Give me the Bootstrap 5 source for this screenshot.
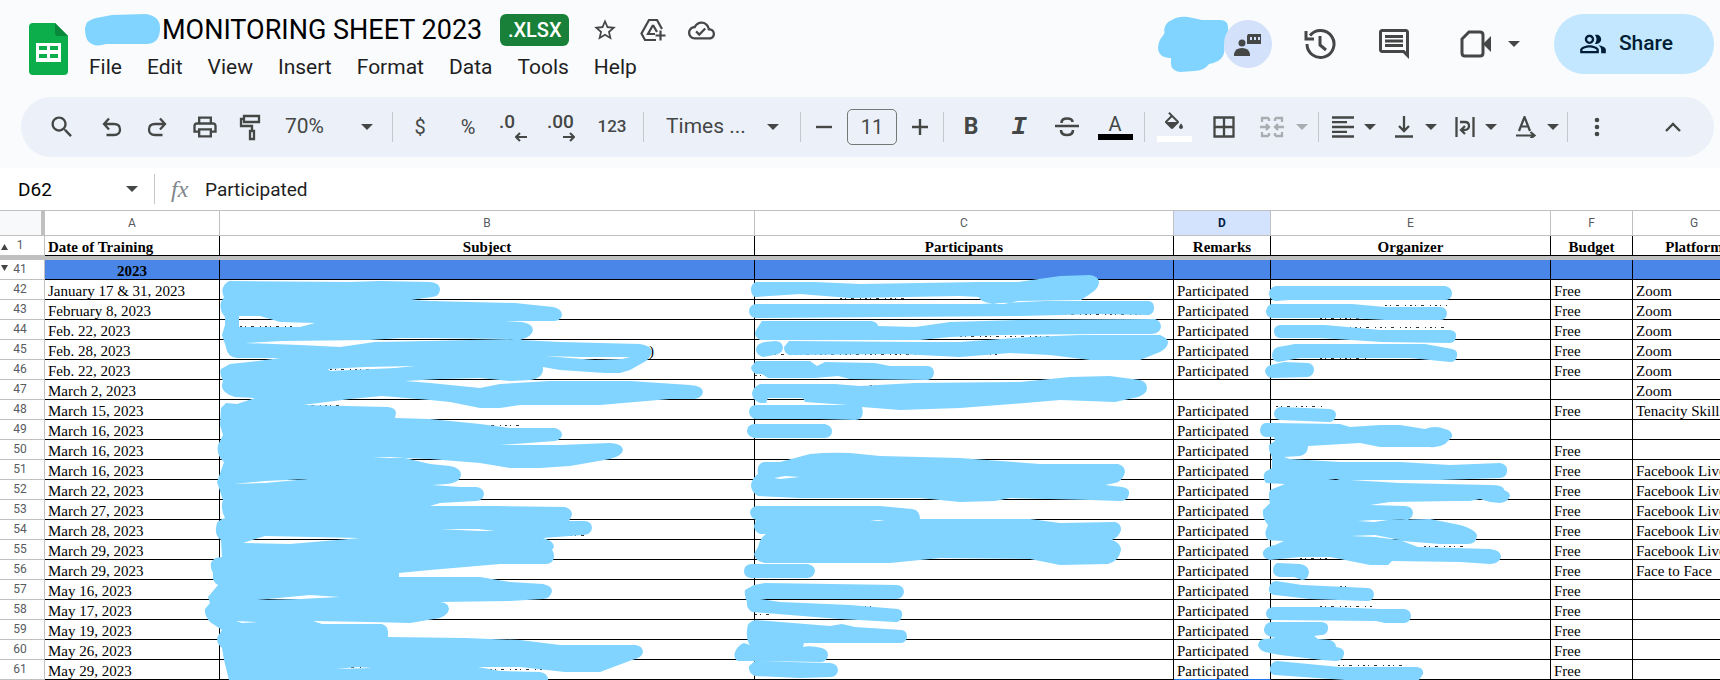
<!DOCTYPE html>
<html lang="en">
<head>
<meta charset="utf-8">
<meta name="viewport" content="width=device-width, initial-scale=1">
<title>Monitoring Sheet 2023</title>
<link href="https://cdn.jsdelivr.net/npm/bootstrap@5.3.0/dist/css/bootstrap.min.css" rel="stylesheet">
<style>
  :root { --ink: #444746; --cover: #80d4ff; --rule: #c0c0c0; }
  body { font-family: Roboto, "Liberation Sans", sans-serif; background: #fff; color: #1f1f1f; overflow: hidden; }
  svg { display: block; flex: none; }
  button, select, input { font-family: inherit; color: inherit; }
  button { background: none; border: 0; padding: 0; }
  .app-top { background: #f9fbfd; padding-bottom: 11px; }
  .app-head { height: 97px; padding: 14px 6px 0 29px; }
  .doc-name { font-size: 27px; font-weight: 400; line-height: 32px; color: #000; margin: 0 0 0 2px; }
  .name-cover { width: 76px; }
  .file-kind { background: #188038; color: #fff; font-size: 20px; font-weight: 500; line-height: 32px; width: 69px; border-radius: 6px; text-align: center; margin-left: 18px; }
  .title-tools { color: var(--ink); gap: 22px; margin-left: 23px; }
  .menu-row { gap: 25px; margin-top: 5px; padding-left: 5px; }
  .menu-row a { font-size: 21px; line-height: 32px; color: #1f1f1f; text-decoration: none; }
  .head-tools { color: var(--ink); height: 60px; }
  .presence { background: #d3e1fb; width: 48px; height: 48px; border-radius: 50%; margin-left: -5px; }
  .share-btn { background: #c2e7ff; color: #001d35; width: 160px; height: 60px; border-radius: 30px; font-size: 21px; font-weight: 500; margin-left: 34px; padding-right: 16px; }
  .tool-strip { background: #ecf1f9; color: var(--ink); height: 60px; border-radius: 30px; margin: 0 6px 0 21px; padding: 0 17px 0 12px; }
  .tool-strip > * { flex: none; }
  .tool-strip button { height: 44px; display: flex; align-items: center; justify-content: center; }
  .t42 { width: 42px; } .t46 { width: 46px; } .t48 { width: 48px; } .t54 { width: 54px; } .t58 { width: 58px; }
  .t-menu { width: 61px; gap: 10px; }
  .t-merge { width: 73px; gap: 12px; color: #a9acb0; }
  .bar { width: 1px; height: 30px; background: #c4c7cc; }
  .pick { appearance: none; border: 0; background: url("data:image/svg+xml,%3Csvg xmlns='http://www.w3.org/2000/svg' width='12' height='6'%3E%3Cpath fill='%23444746' d='M0 0h12L6 6z'/%3E%3C/svg%3E") no-repeat right 19px center; height: 44px; font-size: 21px; }
  .pick-zoom { width: 121px; padding: 0 0 0 14px; }
  .pick-font { width: 156px; padding: 0 0 0 22px; background-position: right 21px center; }
  .size-box { width: 50px; height: 36px; border: 1px solid #747775; border-radius: 5px; background: none; text-align: center; font-size: 20px; padding: 0; }
  .sym { font-size: 20px; line-height: 24px; }
  .sym-bold { font-size: 23px; font-weight: 700; }
  .sym-italic { font: italic 700 26px "Liberation Mono", monospace; }
  .digits { font-size: 17px; font-weight: 500; }
  .decimals { font-size: 19px; font-weight: 500; line-height: 20px; }
  .swatch { width: 35px; height: 6px; }
  .formula-row { height: 42px; }
  .formula-row input { border: 0; background: none; font-size: 19px; padding: 0; height: 30px; }
  .name-box { width: 108px; color: #000; margin-left: 18px; }
  .fx { font: italic 24px "Liberation Serif", serif; color: #80868b; width: 34px; }
  .grid-area { border-top: 1px solid var(--rule); overflow: hidden; }
  .sheet { table-layout: fixed; width: 1756px; border-collapse: separate; border-spacing: 0; font: 15px/17px "Liberation Serif", "Times New Roman", serif; color: #000; }
  .sheet td, .sheet .titles th { height: 20px; padding: 2px 0 0 3px; border-right: 1px solid #000; border-bottom: 1px solid #000; white-space: nowrap; overflow: hidden; vertical-align: bottom; line-height: 16px; padding-top: 3px; }
  .sheet .titles th.text-center, .sheet .year td { padding-left: 0; }
  .sheet .letters th { height: 25px; padding: 0; font: 400 12px/24px Roboto, sans-serif; color: #575b5f; text-align: center; border-right: 1px solid var(--rule); border-bottom: 1px solid var(--rule); }
  .sheet .letters .corner { background: #f8f9fa; border-right: 4px solid var(--rule); }
  .sheet .letters .picked { background: #d3e3fd; color: #041e49; font-weight: 700; }
  .sheet th.rh, .sheet .titles th.rh { position: relative; padding: 0 4px 0 0; height: 20px; font: 400 12px/19px Roboto, sans-serif; color: #575b5f; text-align: center; border-right: 1px solid var(--rule); border-bottom: 1px solid var(--rule); }
  .sheet .rh svg { position: absolute; left: 1px; top: 8px; }
  .sheet .year .rh svg { top: 5px; }
  .sheet .frozen td { height: 4px; padding: 0; border: 0; background: var(--rule); line-height: 0; }
  .sheet .year td { background: #4a86e8; font-weight: 700; text-align: center; }
  .sheet td.above-picked { border-bottom-color: #1a73e8; }
  .covers { position: absolute; left: 0; top: 0; pointer-events: none; }
</style>
</head>
<body>
<div class="app-top">
  <header class="app-head d-flex justify-content-between">
    <div class="d-flex">
      <svg width="39" height="53" viewBox="0 0 39 53" class="mt-2"><path fill="#0cae4b" d="M4 1h22l13 13v35q0 4-4 4H4q-4 0-4-4V5q0-4 4-4z"/><path fill="#07883a" d="M26 1l13 13H29q-3 0-3-3z"/><path fill="#fff" fill-rule="evenodd" d="M7 21h25v19H7zm3 3v4h8v-4zm11 0v4h8v-4zM10 32v4h8v-4zm11 0v4h8v-4z"/></svg>
      <div class="ms-3">
        <div class="d-flex align-items-center">
          <svg class="name-cover" width="76" height="32" viewBox="0 0 76 32"><path fill="var(--cover)" d="M12 4L28 1 62 0Q76 2 76 14 76 30 62 30L22 30Q10 34 4 27 1 23 1 14 2 6 12 4z"/></svg>
          <h1 class="doc-name">MONITORING SHEET 2023</h1>
          <span class="file-kind">.XLSX</span>
          <div class="title-tools d-flex align-items-center">
            <button aria-label="Star"><svg width="26" height="26" viewBox="0 0 24 24" fill="currentColor"><path d="M22 9.24l-7.19-.62L12 2 9.19 8.63 2 9.24l5.46 4.73L5.82 21 12 17.27 18.18 21l-1.63-7.03L22 9.24zM12 15.4l-3.76 2.27 1-4.28-3.32-2.88 4.38-.38L12 6.1l1.71 4.04 4.38.38-3.32 2.88 1 4.28L12 15.4z"/></svg></button>
            <button aria-label="Move"><svg width="26" height="26" viewBox="0 0 26 26" fill="none" stroke="currentColor" stroke-width="2.2"><path d="M22 12L17 3H9L1.500 16.500 5 23h11M13 8l-5 9h7M13 8l4 7M20.500 13.500v10M15.500 18.500h10"/></svg></button>
            <button aria-label="Saved"><svg width="27" height="27" viewBox="0 0 24 24" fill="currentColor"><path d="M19.35 10.04C18.67 6.59 15.64 4 12 4 9.11 4 6.6 5.64 5.35 8.04 2.34 8.36 0 10.91 0 14c0 3.31 2.69 6 6 6h13c2.76 0 5-2.24 5-5 0-2.64-2.05-4.78-4.65-4.96zM19 18H6c-2.21 0-4-1.79-4-4 0-2.05 1.53-3.76 3.56-3.97l1.07-.11.5-.95C8.08 7.14 9.94 6 12 6c2.62 0 4.88 1.86 5.39 4.43l.3 1.5 1.53.11c1.56.1 2.78 1.41 2.78 2.96 0 1.65-1.35 3-3 3zm-9-3.82l-2.09-2.09L6.5 13.5 10 17l6.01-6.01-1.41-1.41z"/></svg></button>
          </div>
        </div>
        <nav class="menu-row d-flex">
          <a href="#">File</a><a href="#">Edit</a><a href="#">View</a><a href="#">Insert</a><a href="#">Format</a><a href="#">Data</a><a href="#">Tools</a><a href="#">Help</a>
        </nav>
      </div>
    </div>
    <div class="head-tools d-flex align-items-center">
      <svg width="71" height="56" viewBox="0 0 71 56"><path fill="var(--cover)" d="M14 4Q20 0 30 1L44 4H63Q71 5 70 13 72 22 66 29 69 45 51 48 46 55 36 55L22 56Q12 54 13 46L13 42Q0 42 0 31 1 24 4 21 8 16 6 15 7 6 14 4z"/></svg>
      <button class="presence d-flex align-items-center justify-content-center" aria-label="Viewers"><svg width="28" height="26" viewBox="0 0 28 26" fill="currentColor"><circle cx="8" cy="12" r="3.500"/><path d="M0 25v-2q1-6 8-6t8 6v2z"/><path fill-rule="evenodd" d="M14 3h13v10H13V5zm2 3v3h2V6zm4 0v3h2V6zm4 0v3h2V6z"/></svg></button>
      <button aria-label="Version history" class="ms-4"><svg class="ms-2" width="32" height="32" viewBox="0 0 32 32" fill="none" stroke="currentColor" stroke-width="3"><path d="M3 16a13.500 13.500 0 1 0 3-8.500M2 3v8h8M16 8v9l6 5"/></svg></button>
      <button aria-label="Comments" class="mx-4"><svg class="mx-3" width="36" height="36" viewBox="0 0 24 24" fill="currentColor"><path d="M21.990 4c0-1.100-.89-2-1.990-2H4c-1.100 0-2 .9-2 2v12c0 1.100.9 2 2 2h14l4 4-.01-18zM20 4v13.170L18.830 16H4V4h16zM6 12h12v2H6zm0-3h12v2H6zm0-3h12v2H6z"/></svg></button>
      <button aria-label="Join a call" class="d-flex align-items-center"><svg class="ms-2" width="32" height="30" viewBox="0 0 32 30"><path fill="none" stroke="currentColor" stroke-width="3" d="M9 3h11q3 0 3 3v18q0 3-3 3H5q-3 0-3-3V10z"/><path fill="currentColor" d="M23 15l8-8v16z"/></svg><svg class="ms-3" width="12" height="6"><path fill="currentColor" d="M0 0h12L6 6z"/></svg></button>
      <button class="share-btn d-flex align-items-center justify-content-center"><svg class="me-2" width="28" height="28" viewBox="0 0 24 24" fill="currentColor"><path d="M16.670 13.130C18.040 14.060 19 15.320 19 17v3h4v-3c0-2.180-3.570-3.470-6.330-3.870zM15 12c2.210 0 4-1.790 4-4s-1.790-4-4-4c-.47 0-.91.1-1.330.24C14.500 5.270 15 6.580 15 8s-.5 2.730-1.330 3.760c.42.14.86.24 1.330.24zM9 12c2.210 0 4-1.790 4-4s-1.790-4-4-4-4 1.790-4 4 1.790 4 4 4zm0-6c1.100 0 2 .9 2 2s-.9 2-2 2-2-.9-2-2 .9-2 2-2zm0 7c-2.670 0-8 1.340-8 4v3h16v-3c0-2.660-5.330-4-8-4zm6 5H3v-.99C3.200 16.290 6.300 15 9 15s5.800 1.290 6 2v1z"/></svg><span class="ps-1">Share</span></button>
    </div>
  </header>

  <div class="tool-strip d-flex align-items-center">
    <button class="t58" aria-label="Search"><svg width="28" height="28" viewBox="0 0 24 24" fill="currentColor"><path d="M15.500 14h-.79l-.28-.27C15.410 12.590 16 11.110 16 9.500 16 5.910 13.090 3 9.500 3S3 5.910 3 9.500 5.910 16 9.500 16c1.610 0 3.090-.59 4.230-1.570l.27.28v.79l5 4.990L20.490 19l-4.990-5zm-6 0C7.010 14 5 11.990 5 9.500S7.010 5 9.500 5 14 7.010 14 9.500 11.990 14 9.500 14z"/></svg></button>
    <button class="t42" aria-label="Undo"><svg width="20" height="20" viewBox="0 0 20 20" fill="none" stroke="currentColor" stroke-width="2.300"><path d="M7 1.500L2 7l5 5.500M2 7h10q6 0 6 5.500T12 18H4.500"/></svg></button>
    <button class="t48" aria-label="Redo"><svg width="20" height="20" viewBox="0 0 20 20" fill="none" stroke="currentColor" stroke-width="2.300"><path d="M13 1.500L18 7l-5 5.500M18 7H8q-6 0-6 5.500T8 18h7.500"/></svg></button>
    <button class="t48" aria-label="Print"><svg width="28" height="28" viewBox="0 0 24 24" fill="currentColor"><path d="M19 8h-1V3H6v5H5c-1.660 0-3 1.340-3 3v6h4v4h12v-4h4v-6c0-1.660-1.340-3-3-3zM8 5h8v3H8V5zm8 12v2H8v-4h8v2zm2-2v-2H6v2H4v-4c0-.55.45-1 1-1h14c.55 0 1 .45 1 1v4h-2z"/></svg></button>
    <button class="t42" aria-label="Paint format"><svg width="22" height="27" viewBox="0 0 22 27" fill="none" stroke="currentColor" stroke-width="2.300"><path d="M5 2h15v6H5zM5 5H2v7h11v5M11 17h4v8h-4z"/></svg></button>
    <select class="pick pick-zoom" aria-label="Zoom"><option>70%</option></select>
    <span class="bar"></span>
    <button class="t54 sym" aria-label="Currency">$</button>
    <button class="t42 sym" aria-label="Percent">%</button>
    <button class="t48" aria-label="Decrease decimals"><span class="decimals"><span class="d-block text-start">.0</span><svg class="ms-3" width="12" height="10" viewBox="0 0 12 10" fill="none" stroke="currentColor" stroke-width="2"><path d="M12 5H1M5 1L1 5l4 4"/></svg></span></button>
    <button class="t48" aria-label="Increase decimals"><span class="decimals"><span class="d-block text-start">.00</span><svg class="ms-3" width="12" height="10" viewBox="0 0 12 10" fill="none" stroke="currentColor" stroke-width="2"><path d="M0 5h11M7 1l4 4-4 4"/></svg></span></button>
    <button class="t54 digits">123</button>
    <span class="bar ms-1"></span>
    <select class="pick pick-font" aria-label="Font"><option>Times ...</option></select>
    <span class="bar"></span>
    <button class="t46" aria-label="Smaller"><svg width="16" height="16" stroke="currentColor" stroke-width="2.400"><path d="M0 8h16"/></svg></button>
    <input class="size-box" value="11" aria-label="Font size">
    <button class="t46" aria-label="Larger"><svg width="16" height="16" stroke="currentColor" stroke-width="2.400"><path d="M0 8h16M8 0v16"/></svg></button>
    <span class="bar"></span>
    <button class="t54 sym-bold" aria-label="Bold">B</button>
    <button class="t42 sym-italic" aria-label="Italic">I</button>
    <button class="t54" aria-label="Strikethrough"><svg width="24" height="20" viewBox="0 0 24 20" fill="none" stroke="currentColor" stroke-width="2.600"><path d="M0 9h24M6.500 6q0-4.500 5.500-4.500T17.500 5M6 13q0 5 6 5t6-5"/></svg></button>
    <button class="t42 flex-column" aria-label="Text colour"><span class="sym lh-1">A</span><span class="swatch bg-black"></span></button>
    <span class="bar ms-2"></span>
    <button class="t58 flex-column" aria-label="Fill colour"><svg width="24" height="24" viewBox="0 0 24 24" fill="currentColor"><path d="M16.560 8.940L7.620 0 6.210 1.410l2.380 2.380-5.150 5.150c-.59.59-.59 1.540 0 2.120l5.500 5.500c.29.29.68.44 1.060.44s.77-.15 1.060-.44l5.500-5.500c.59-.58.59-1.530 0-2.120zM5.210 10L10 5.210 14.790 10H5.210zM19 11.500s-2 2.170-2 3.500c0 1.100.9 2 2 2s2-.9 2-2c0-1.330-2-3.500-2-3.500z"/></svg><span class="swatch bg-white"></span></button>
    <button class="t42" aria-label="Borders"><svg width="22" height="22" viewBox="0 0 22 22" fill="none" stroke="currentColor" stroke-width="2.300"><path d="M1.500 1.500h19v19h-19zM11 1v20M1 11h20"/></svg></button>
    <button class="t-merge" aria-label="Merge cells"><svg class="ms-1" width="24" height="22" viewBox="0 0 24 22" fill="none" stroke="currentColor" stroke-width="2.300"><path d="M9 2H2v4M9 20H2v-4M15 2h7v4M15 20h7v-4M9 2v3M9 20v-3M15 2v3M15 20v-3M0 11h9M6 8l3 3-3 3M24 11h-9M18 8l-3 3 3 3"/></svg><svg width="12" height="6"><path fill="currentColor" d="M0 0h12L6 6z"/></svg></button>
    <span class="bar"></span>
    <button class="t-menu ms-1" aria-label="Align"><svg width="22" height="22" stroke="currentColor" stroke-width="2.300"><path d="M0 1.500h22M0 6.200h15M0 11h22M0 15.800h15M0 20.500h22"/></svg><svg width="12" height="6"><path fill="currentColor" d="M0 0h12L6 6z"/></svg></button>
    <button class="t-menu" aria-label="Vertical align"><svg width="22" height="22" viewBox="0 0 22 22" fill="none" stroke="currentColor" stroke-width="2.300"><path d="M2 20.500h18M11 0v15M6 10l5 5 5-5"/></svg><svg width="12" height="6"><path fill="currentColor" d="M0 0h12L6 6z"/></svg></button>
    <button class="t-menu" aria-label="Wrapping"><svg width="20" height="20" viewBox="0 0 20 20" fill="none" stroke="currentColor" stroke-width="2.300"><path d="M1.500 0v20M18.500 0v20M5 5h5q4 0 4 4t-5 4H7M10 9l-4 4 4 4"/></svg><svg width="12" height="6"><path fill="currentColor" d="M0 0h12L6 6z"/></svg></button>
    <button class="t-menu" aria-label="Rotation"><svg width="22" height="22" viewBox="0 0 22 22" fill="none" stroke="currentColor" stroke-width="2.200"><path d="M4 15L9.500 1 15 15M6 10.500h7M1 19.500h18M15.500 16l4 3.500-4 3"/></svg><svg width="12" height="6"><path fill="currentColor" d="M0 0h12L6 6z"/></svg></button>
    <span class="bar"></span>
    <button class="t58" aria-label="More"><svg width="6" height="20" fill="currentColor"><circle cx="3" cy="3" r="2.300"/><circle cx="3" cy="10" r="2.300"/><circle cx="3" cy="17" r="2.300"/></svg></button>
    <button class="t48 ms-auto" aria-label="Hide menus"><svg width="16" height="10" viewBox="0 0 16 10" fill="none" stroke="currentColor" stroke-width="2.400"><path d="M1 9l7-7 7 7"/></svg></button>
  </div>
</div>

<div class="formula-row d-flex align-items-center">
  <input class="name-box" value="D62" aria-label="Name box">
  <button aria-label="Named ranges"><svg width="12" height="6"><path fill="#444746" d="M0 0h12L6 6z"/></svg></button>
  <span class="bar mx-3"></span>
  <span class="fx">fx</span>
  <input class="flex-grow-1" value="Participated" aria-label="Formula">
</div>

<main class="grid-area position-relative">
<table class="sheet">
  <colgroup><col style="width:45px"><col style="width:175px"><col style="width:535px"><col style="width:419px"><col style="width:97px"><col style="width:280px"><col style="width:82px"><col style="width:123px"></colgroup>
  <thead>
    <tr class="letters"><th class="corner"></th><th>A</th><th>B</th><th>C</th><th class="picked">D</th><th>E</th><th>F</th><th>G</th></tr>
    <tr class="titles"><th class="rh"><svg width="7" height="6"><path fill="#444" d="M0 6h7L3.500 0z"/></svg>1</th><th class="text-start">Date of Training</th><th class="text-center">Subject</th><th class="text-center">Participants</th><th class="text-center">Remarks</th><th class="text-center">Organizer</th><th class="text-center">Budget</th><th class="text-center">Platform</th></tr>
  </thead>
  <tbody>
    <tr class="frozen"><td colspan="8"></td></tr>
    <tr class="year"><th class="rh"><svg width="7" height="6"><path fill="#444" d="M0 0h7L3.500 6z"/></svg>41</th><td>2023</td><td></td><td></td><td></td><td></td><td></td><td></td></tr>
    <tr><th class="rh">42</th><td>January 17 &amp; 31, 2023</td><td></td><td></td><td>Participated</td><td></td><td>Free</td><td>Zoom</td></tr>
    <tr><th class="rh">43</th><td>February 8, 2023</td><td></td><td></td><td>Participated</td><td></td><td>Free</td><td>Zoom</td></tr>
    <tr><th class="rh">44</th><td>Feb. 22, 2023</td><td></td><td></td><td>Participated</td><td></td><td>Free</td><td>Zoom</td></tr>
    <tr><th class="rh">45</th><td>Feb. 28, 2023</td><td></td><td></td><td>Participated</td><td></td><td>Free</td><td>Zoom</td></tr>
    <tr><th class="rh">46</th><td>Feb. 22, 2023</td><td></td><td></td><td>Participated</td><td></td><td>Free</td><td>Zoom</td></tr>
    <tr><th class="rh">47</th><td>March 2, 2023</td><td></td><td></td><td></td><td></td><td></td><td>Zoom</td></tr>
    <tr><th class="rh">48</th><td>March 15, 2023</td><td></td><td></td><td>Participated</td><td></td><td>Free</td><td>Tenacity Skills</td></tr>
    <tr><th class="rh">49</th><td>March 16, 2023</td><td></td><td></td><td>Participated</td><td></td><td></td><td></td></tr>
    <tr><th class="rh">50</th><td>March 16, 2023</td><td></td><td></td><td>Participated</td><td></td><td>Free</td><td></td></tr>
    <tr><th class="rh">51</th><td>March 16, 2023</td><td></td><td></td><td>Participated</td><td></td><td>Free</td><td>Facebook Live</td></tr>
    <tr><th class="rh">52</th><td>March 22, 2023</td><td></td><td></td><td>Participated</td><td></td><td>Free</td><td>Facebook Live</td></tr>
    <tr><th class="rh">53</th><td>March 27, 2023</td><td></td><td></td><td>Participated</td><td></td><td>Free</td><td>Facebook Live</td></tr>
    <tr><th class="rh">54</th><td>March 28, 2023</td><td></td><td></td><td>Participated</td><td></td><td>Free</td><td>Facebook Live</td></tr>
    <tr><th class="rh">55</th><td>March 29, 2023</td><td></td><td></td><td>Participated</td><td></td><td>Free</td><td>Facebook Live</td></tr>
    <tr><th class="rh">56</th><td>March 29, 2023</td><td></td><td></td><td>Participated</td><td></td><td>Free</td><td>Face to Face</td></tr>
    <tr><th class="rh">57</th><td>May 16, 2023</td><td></td><td></td><td>Participated</td><td></td><td>Free</td><td></td></tr>
    <tr><th class="rh">58</th><td>May 17, 2023</td><td></td><td></td><td>Participated</td><td></td><td>Free</td><td></td></tr>
    <tr><th class="rh">59</th><td>May 19, 2023</td><td></td><td></td><td>Participated</td><td></td><td>Free</td><td></td></tr>
    <tr><th class="rh">60</th><td>May 26, 2023</td><td></td><td></td><td>Participated</td><td></td><td>Free</td><td></td></tr>
    <tr><th class="rh">61</th><td>May 29, 2023</td><td></td><td></td><td class="above-picked">Participated</td><td></td><td>Free</td><td></td></tr>
  </tbody>
</table>

<!-- marker strokes that hide the private cells -->
<svg class="covers" width="1720" height="469" viewBox="0 211 1720 469" fill="#80d4ff" fill-rule="evenodd">
  <!-- ends of the hidden words -->
  <g stroke="#333" stroke-width="1" fill="none" stroke-dasharray="2 3 1 5 3 6 1 4">
    <path d="M240 326.500h55M330 369.500h45M480 425.500h40M300 405.500h40M520 535.500h70M490 669.500h55M340 667.500h25M840 298.500h70M1060 314.500h95M960 336.500h200M770 354.500h230M755 375.500h15M870 385.500h40M1010 497.500h6M755 614.500h20M845 606.500h26"/>
    <path d="M1280 286.500h140M1385 305.500h62M1320 318.500h60M1330 327.500h120M1320 358.500h50M1276 406.500h50M1424 546.500h40M1300 558.500h30M1320 606.500h55M1338 665.500h70M1340 586.500h8"/>
  </g>
  <text x="649" y="356" font-family="Liberation Serif, serif" font-size="15" fill="#000">)</text>
  <path d="M229 281L350 282 380 281 430 282Q440 283 440 289 440 296 432 297L411 300 430 301 515 303 553 307Q562 309 562 315 561 321 553 321L505 321 522 322Q533 324 533 330 532 337 520 340L560 342 640 344Q652 346 652 352 650 358 646 361L630 370 620 373 605 373 560 370 543 367Q544 378 530 380L510 381 480 378 440 379 405 381 430 383 460 386 480 388 500 384 550 381 630 381 690 385Q703 386 703 392 702 398 694 399L670 399 600 405 520 405 500 408H480L450 402 430 400 382 396 350 399 303 405 388 407Q396 408 396 413L395 418 430 419 480 424 510 428 555 428Q562 430 562 435 561 440 555 441L500 445H560L610 443Q623 444 623 450 622 456 610 459L570 466 540 468H510L480 463 430 459 405 458 430 464 450 466Q461 468 461 475 460 483 447 484L432 485 460 487H476Q484 488 484 494 483 501 476 501L440 503 430 506H497L565 507Q572 509 572 515L569 521H585Q592 522 592 528 591 535 583 535L543 538Q554 541 554 547L552 550Q554 552 554 557 553 564 546 564H500L430 570 399 573V577H480L510 582 543 584Q552 586 552 591 551 598 543 599L510 601 440 602Q449 603 449 609 448 615 440 618L410 623 370 622 313 621 322 624 382 624Q388 626 388 632V637L465 638 520 640 560 645H635Q643 646 643 652 642 658 632 660L600 672H565L520 667 478 667 500 671 540 672Q548 673 548 680H229L224 660 222 648Q215 642 218 636L222 630 210 622Q204 615 205 609L210 603 208 597 218 585Q213 582 213 578V573Q210 568 211 563 213 557 222 557L221 540Q215 536 216 528 216 520 225 518 220 508 223 500L217 482 224 462Q216 455 218 445L223 435 220 425 221 408 226 403 237 404 255 398 235 397Q221 393 222 385L223 381Q219 373 221 369L230 364 258 361 280 358H237Q227 357 226 347L222 335 225 325V317Q219 310 221 302L224 297Q219 287 229 281zM239 316L260 316 280 322 315 323 300 327H239zM245 343L282 341 370 340 400 338 430 338 515 339 430 341 375 342 340 347 300 345zM328 369L365 367 415 366 395 368 330 371zM545 356L580 357 630 357 622 359 595 360 570 358zM372 457L405 457 390 458zM234 484L265 481 308 479 265 483zM243 543L265 536 360 538 325 541 290 544zM440 529L478 529 495 531 480 531zM257 600L310 595 340 597 300 599zM236 621l22 1-16 1zM335 669L358 667 372 668z"/>
  <path d="M756 282H815L860 284 980 282H1018L1060 276 1090 275Q1099 276 1099 283 1098 289 1090 294L1081 300 1018 301 1004 304Q980 304 979 297L960 296 850 298 800 294 755 297Q751 295 751 289 751 284 756 282zM756 304H980L1045 301H1148q6 0 6 7 0 6-6 7L1100 314 1020 316 756 318q-7-1-7-7 0-6 7-7zM762 321H872Q878 323 878 326L915 327 950 322 1020 320 1155 319Q1161 321 1161 327 1160 333 1152 334H1100L1000 335 950 337 920 340H760Q753 336 756 330zM765 342L776 341Q783 342 783 348 782 354 774 355L763 357Q756 355 756 349 757 343 765 342zM789 341L920 342H960L1030 337 1080 335H1160Q1168 338 1168 343 1167 350 1155 354L1140 360H1090L1050 355 1010 353 960 357 900 354 789 355Q784 353 784 347z"/>
  <path d="M756 361H810L817 366 825 362 875 363 890 366H928q6 1 6 7-1 7-7 7L850 379 838 376 815 378H768L762 374 756 374Q751 371 751 367zM760 384H835L860 386 915 383 1020 382 1070 377 1110 376 1140 380Q1147 382 1147 388 1147 394 1138 397L1115 402 1060 400 1025 403 960 408 900 410 862 407Q865 420 855 420L820 419H755Q749 417 749 411 750 405 756 405H790L848 405 805 402 803 398H768L766 403H760Q752 400 752 393 753 387 760 384zM754 424H825Q832 426 832 431 832 437 825 438H754Q747 436 747 431 747 425 754 424z"/>
  <path d="M764 462H780L810 454Q830 452 850 453L880 456 960 458 1000 461 1040 464H1118Q1125 466 1125 472 1123 481 1115 483L1105 485 1122 487Q1130 488 1129 494 1128 501 1120 501L1090 500 1010 498 995 501 960 502 920 498H800L758 496Q751 492 751 485 752 478 758 474 756 464 764 462zM774 478L785 476 800 477 780 479zM756 506H880L912 509q8 1 8 10H1030L1060 523 1115 522Q1121 523 1121 530 1119 537 1112 540 1121 543 1121 550 1119 561 1108 564L1060 565 1030 559 940 558 890 563H765Q755 561 754 554L758 547Q760 538 766 534L760 534Q754 531 754 526L756 520Q750 517 750 512 751 507 756 506zM870 520L885 520 878 521zM751 564H808Q815 566 815 571 814 577 808 578H751Q744 577 744 571 744 565 751 564z"/>
  <path d="M754 585L765 583 897 585q7 1 7 7-1 6-7 7H760L780 602 850 605 898 609q5 1 4 7-2 7-7 6L840 619 752 612Q746 608 747 602 744 595 745 590zM755 620L830 626 842 624 855 627 902 630q5 1 5 7-1 6-7 6H804L803 647Q810 645 822 648q6 2 6 7-1 7-7 7L760 661 790 662 830 663q8 1 8 7-1 7-7 7L800 678 755 676Q748 673 749 666L755 661H738Q733 658 735 652 738 645 744 643L750 645Q746 640 747 630 747 622 755 620z"/>
  <path d="M1276 286H1445q7 1 7 8-1 6-7 6H1289L1276 301q-7-1-7-8 1-6 7-7zM1272 304H1352L1385 307H1441q6 1 6 7-1 6-7 6H1385L1350 318H1272q-6-1-6-7 1-6 6-7zM1280 325H1325L1380 330H1450q7 1 6 7-1 6-7 6L1382 342 1320 338H1280q-6-1-6-7 0-5 6-6zM1278 347L1295 344H1425L1452 349q6 1 5 7-1 6-7 6L1410 358H1300L1278 362q-6-1-6-7 1-7 6-8zM1271 365L1284 362 1308 363q6 1 6 7-1 7-7 7L1272 378q-6-1-7-7 1-5 6-6zM1280 407L1330 409q6 1 6 6-1 7-7 7L1280 420q-6-1-6-7 1-5 6-6z"/>
  <path d="M1266 423L1340 424 1350 427 1380 425H1400L1425 429Q1435 425 1445 429 1453 431 1452 437L1445 444Q1438 448 1430 447H1380L1360 443 1308 446Q1308 454 1300 456L1284 457 1290 459 1340 462H1400L1450 465 1500 463Q1508 465 1507 471 1507 477 1500 478L1440 480 1350 480 1400 483 1490 485Q1504 485 1504 490 1510 492 1510 496 1508 502 1500 503L1490 502 1480 499 1470 501 1455 501 1390 502 1370 505 1405 506q8 1 8 7-1 7-8 7L1390 520 1430 519 1460 525Q1477 530 1477 536 1476 544 1468 544H1440L1402 541 1418 547 1490 549Q1501 550 1501 557 1499 564 1490 564L1460 562 1392 561 1388 565H1370L1330 557H1300L1270 560Q1262 558 1263 552 1265 547 1275 545L1284 541 1268 540Q1264 535 1266 530L1268 525Q1262 518 1263 510L1270 503Q1268 495 1270 490L1285 484 1266 483Q1262 478 1265 472L1272 468V457Q1268 450 1269 445L1275 441 1274 437H1266q-6-1-6-7 1-7 6-7zM1328 479l12 0-4 1zM1350 536L1375 535 1400 540 1375 537zM1358 521l14-1 16 0-14 2z"/>
  <path d="M1278 563L1300 564q8 1 9 8-1 8-7 8L1294 577H1280q-7-1-7-7 1-7 5-7zM1276 581L1302 585 1368 588q6 1 6 7-1 6-7 6L1310 599 1275 595q-7-1-6-7 1-6 7-7zM1274 607H1330L1380 609H1404q7 1 7 7-1 7-7 7H1385L1376 621 1273 620q-7-1-7-7 1-6 8-6zM1271 622H1322q7 1 6 7-1 6-7 6L1314 636 1318 639 1330 640q6 2 6 7 9 1 8 7-1 7-8 7L1322 660 1280 655 1265 652q-6-2-7-7 1-6 6-6L1276 638Q1263 636 1264 629 1265 623 1271 622zM1277 661L1340 667H1417q7 1 6 7l-4 6H1345L1275 675q-6-1-5-7 1-6 7-7z"/>
</svg>
</main>
<script src="https://cdn.jsdelivr.net/npm/bootstrap@5.3.0/dist/js/bootstrap.bundle.min.js"></script>
</body>
</html>
